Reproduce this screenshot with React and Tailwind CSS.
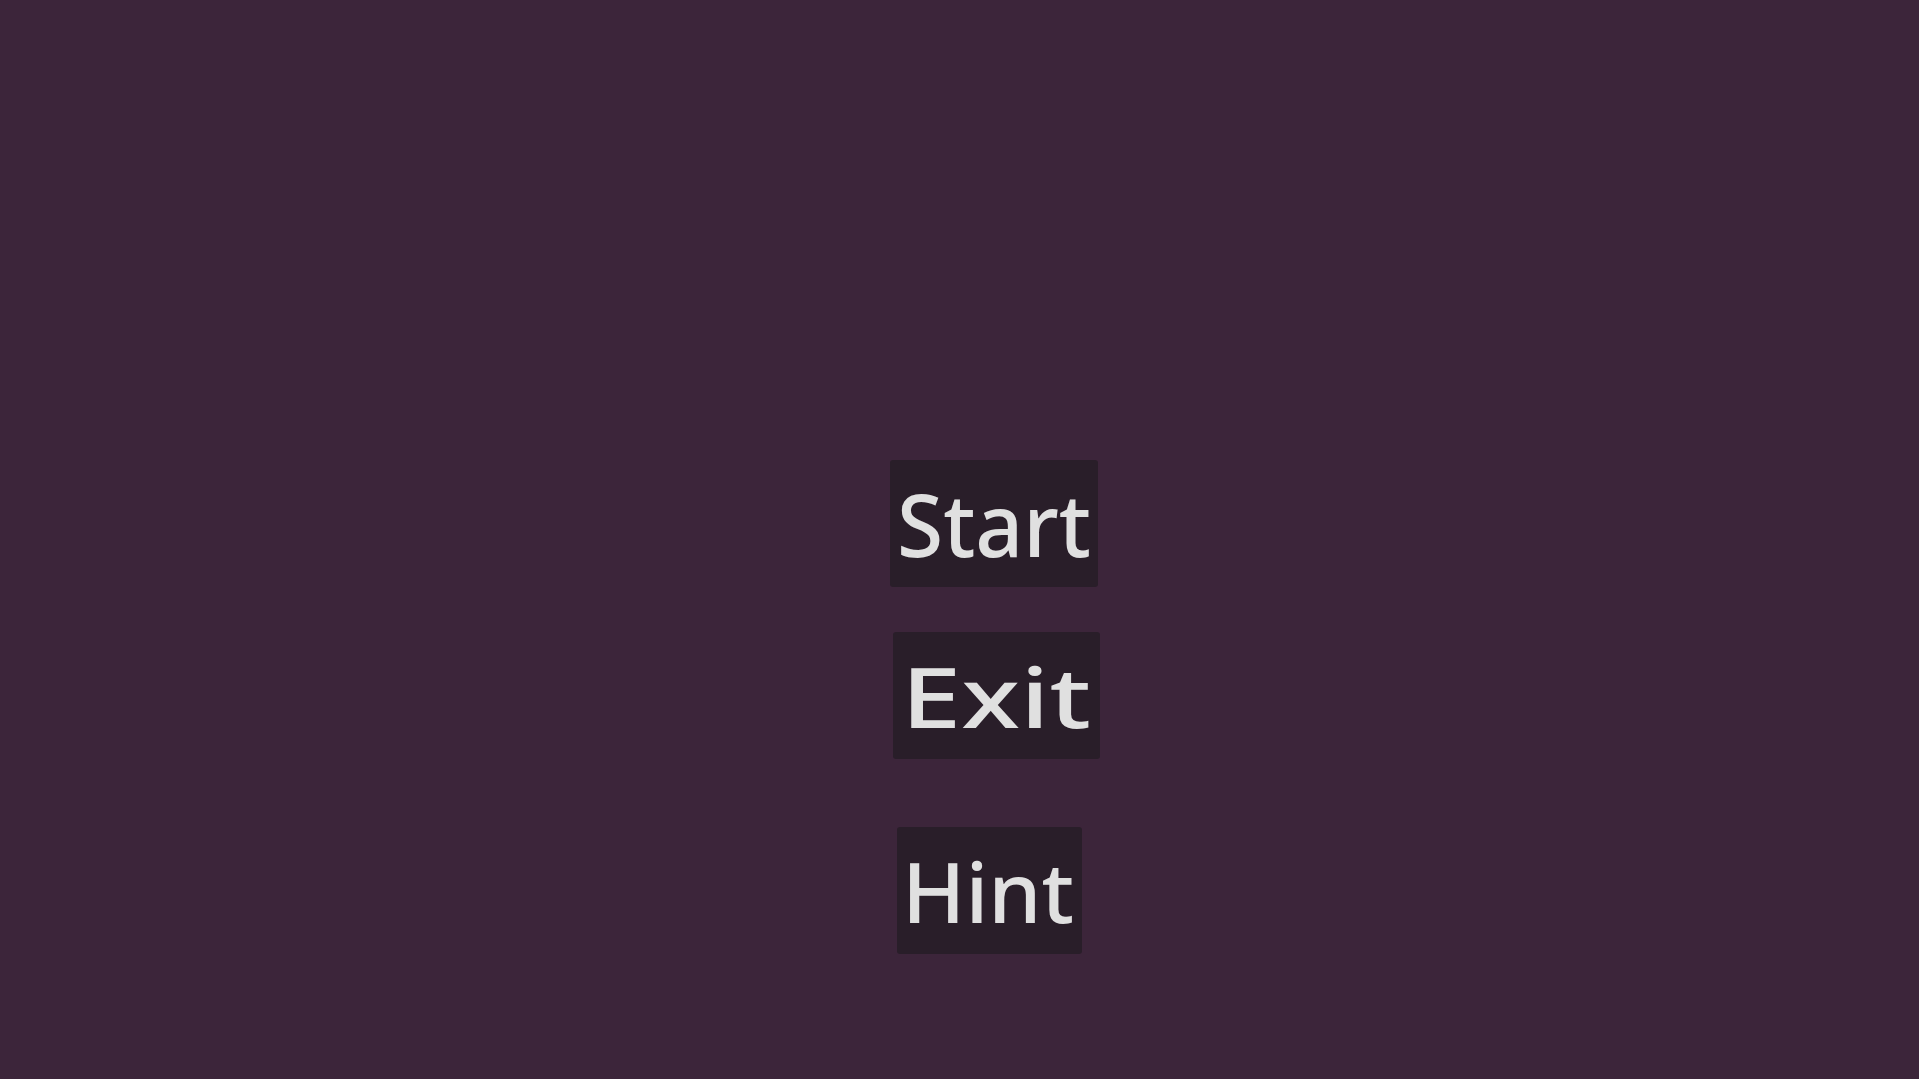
const MenuButton = ({ label, className, textClass }) => (
  <button
    className={`h-[127px] rounded-[3px] bg-[#291e29] text-left font-medium leading-[116px] text-[#e0e0e0] ${className}`}
    style={{ fontFamily: '"Noto Sans", "Open Sans", sans-serif' }}
  >
    <span className={`inline-block origin-left ${textClass}`}>{label}</span>
  </button>
);

export default function App() {
  return (
    <div className="min-h-screen w-full bg-[#3c253a] overflow-hidden">
      <div className="flex flex-col items-start pl-[890px] pt-[460px]">
        <MenuButton
          label="Start"
          className="w-[208px] pl-[7px] pt-[5px] pb-[6px]"
          textClass="text-[87px] scale-x-[0.965]"
        />
        <MenuButton
          label="Exit"
          className="ml-[3px] mt-[45px] w-[207px] pl-[8px] pt-[6px] pb-[5px]"
          textClass="text-[84px] scale-x-[1.29]"
        />
        <MenuButton
          label="Hint"
          className="ml-[7px] mt-[68px] w-[185px] pl-[5px] pt-[6px] pb-[5px]"
          textClass="text-[84px] scale-x-[1.01]"
        />
      </div>
    </div>
  );
}
